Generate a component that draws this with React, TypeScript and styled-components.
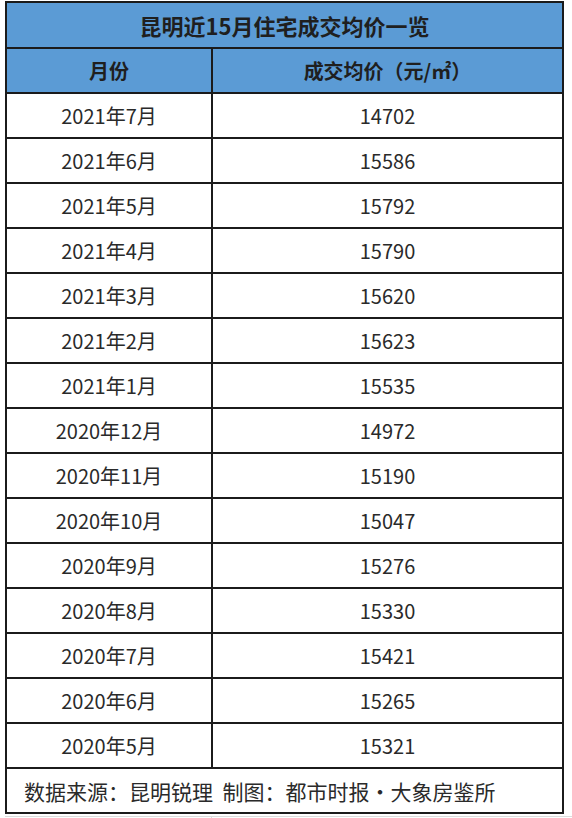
import styled, { createGlobalStyle } from "styled-components";

const GlobalStyle = createGlobalStyle`
  html, body {
    margin: 0;
    padding: 0;
    background: #ffffff;
  }
  body {
    font-family: "Noto Sans CJK SC", "Noto Sans", sans-serif;
  }
`;

const Sheet = styled.div`
  width: 572px;
  height: 818px;
  padding: 1px 0 0 5px;
  box-sizing: border-box;
  overflow: hidden;
  background: #ffffff;
`;

const Table = styled.table`
  border-collapse: collapse;
  width: 557px;
  table-layout: fixed;
  color: #262626;
`;

const TitleCell = styled.th`
  height: 44px;
  padding: 0;
  background: #5b9bd5;
  border: 2px solid #1b1b1b;
  font-size: 22px;
  font-weight: 700;
  color: #1f1f1f;
  text-align: center;
`;

const HeadCell = styled.th`
  height: 43px;
  padding: 0;
  background: #5b9bd5;
  border: 2px solid #1b1b1b;
  font-size: 20px;
  font-weight: 700;
  color: #1f1f1f;
  text-align: center;
`;

const Cell = styled.td`
  height: 43px;
  padding: 0;
  border: 2px solid #1b1b1b;
  font-size: 20px;
  font-weight: 400;
  color: #2a2a2a;
  text-align: center;
`;

const NoteCell = styled.td`
  height: 43px;
  padding: 0 0 0 17px;
  border: 2px solid #1b1b1b;
  font-size: 21px;
  color: #2a2a2a;
  text-align: left;
  white-space: nowrap;
`;

const GridTail = styled.div`
  display: grid;
  grid-template-columns: 206px 351px;
  height: 6px;
  border-top: 1px solid #dcdcdc;
  margin-top: 2px;
  & > span + span {
    border-left: 1px solid #dcdcdc;
  }
`;

const rows: [string, number][] = [
  ["2021年7月", 14702],
  ["2021年6月", 15586],
  ["2021年5月", 15792],
  ["2021年4月", 15790],
  ["2021年3月", 15620],
  ["2021年2月", 15623],
  ["2021年1月", 15535],
  ["2020年12月", 14972],
  ["2020年11月", 15190],
  ["2020年10月", 15047],
  ["2020年9月", 15276],
  ["2020年8月", 15330],
  ["2020年7月", 15421],
  ["2020年6月", 15265],
  ["2020年5月", 15321],
];

export default function App() {
  return (
    <Sheet>
      <GlobalStyle />
      <Table>
        <colgroup>
          <col style={{ width: 206 }} />
          <col style={{ width: 351 }} />
        </colgroup>
        <thead>
          <tr>
            <TitleCell colSpan={2}>昆明近15月住宅成交均价一览</TitleCell>
          </tr>
          <tr>
            <HeadCell>月份</HeadCell>
            <HeadCell>成交均价（元/㎡）</HeadCell>
          </tr>
        </thead>
        <tbody>
          {rows.map(([month, price]) => (
            <tr key={month}>
              <Cell>{month}</Cell>
              <Cell>{price}</Cell>
            </tr>
          ))}
          <tr>
            <NoteCell colSpan={2}>
              数据来源：昆明锐理&nbsp;&nbsp;制图：都市时报·大象房鉴所
            </NoteCell>
          </tr>
        </tbody>
      </Table>
      <GridTail>
        <span />
        <span />
      </GridTail>
    </Sheet>
  );
}
